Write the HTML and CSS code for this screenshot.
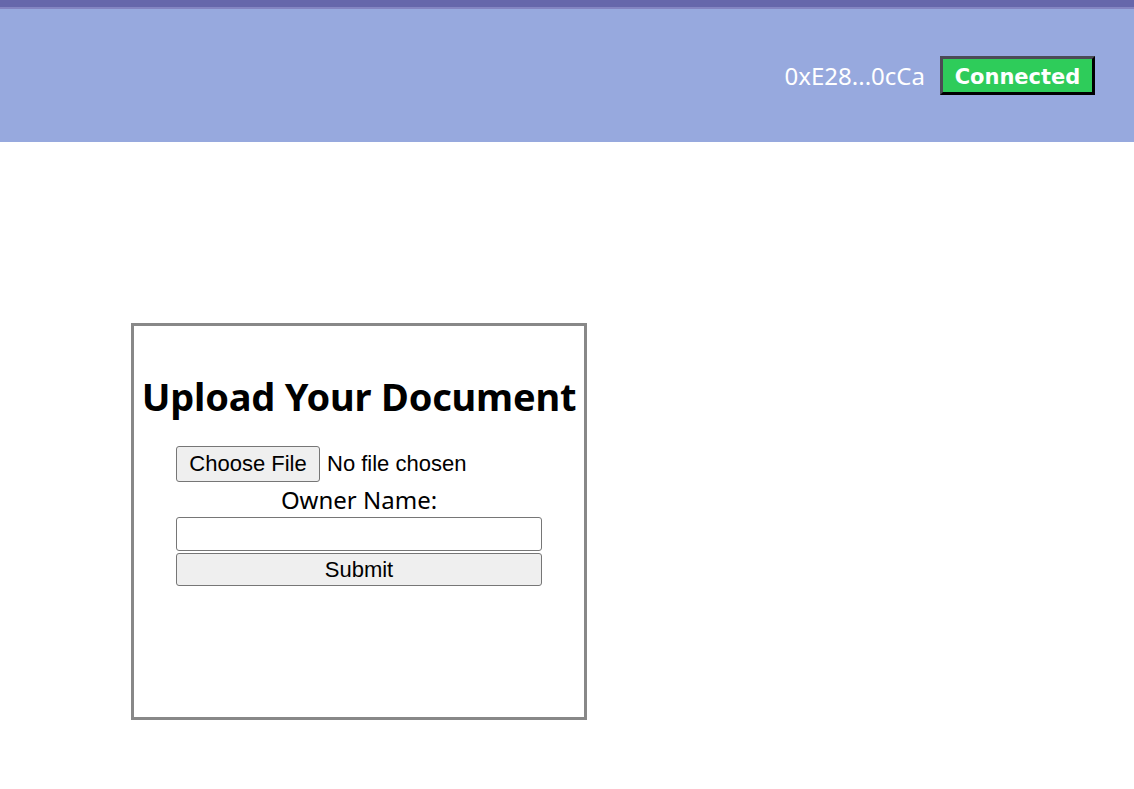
FILE: index.html
```html
<!DOCTYPE html>
<html>
<head>
<meta charset="utf-8">
<title>Upload</title>
<link rel="stylesheet" href="styles.css">
</head>
<body>
<header class="topbar">
  <div class="topbar-inner">
    <span class="address">0xE28...0cCa</span>
    <button class="connected">Connected</button>
  </div>
</header>
<main class="main">
  <section class="card">
    <h1 class="title">Upload Your Document</h1>
    <form class="form">
      <div class="file-row">
        <button type="button" class="file-btn">Choose File</button>
        <span class="file-text">No file chosen</span>
      </div>
      <label class="label" for="owner">Owner Name:</label>
      <input class="text-input" id="owner" type="text">
      <button type="button" class="submit">Submit</button>
    </form>
  </section>
</main>
</body>
</html>
```
FILE: styles.css
```css
html, body {
  margin: 0;
  padding: 0;
  background: #ffffff;
}
body {
  font-family: "Open Sans", "Noto Sans", sans-serif;
}
.topbar {
  background: #97a9de;
  border-top: 7px solid #6667ab;
  height: 142px;
  box-sizing: border-box;
}
.topbar-inner {
  border-top: 2px solid #8485c2;
  height: 135px;
  box-sizing: border-box;
  display: flex;
  align-items: center;
  justify-content: flex-end;
  padding-right: 39px;
  gap: 15px;
}
.address {
  color: #ffffff;
  font-size: 24px;
  font-family: "Noto Sans", sans-serif;
  letter-spacing: 0;
}
.connected {
  height: 39px;
  width: 155px;
  box-sizing: border-box;
  background: #2ecc5a;
  color: #ffffff;
  font-family: "DejaVu Sans", sans-serif;
  font-weight: 700;
  font-size: 21px;
  letter-spacing: 0;
  border-style: solid;
  border-width: 3px;
  border-color: #4b4b55 #000000 #000000 #4b4b55;
  padding: 2px 0 0 0;
}
.main {
  padding: 181px 0 0 131px;
}
.card {
  width: 456px;
  height: 397px;
  box-sizing: border-box;
  border: 3px solid #888888;
  padding-top: 42px;
  display: flex;
  flex-direction: column;
  align-items: center;
}
.title {
  margin: 0 0 22px 0;
  font-family: "Noto Sans", sans-serif;
  font-weight: 700;
  font-size: 38px;
  letter-spacing: -0.2px;
  line-height: 56px;
  color: #000000;
  white-space: nowrap;
}
.form {
  width: 366px;
  display: flex;
  flex-direction: column;
}
.file-row {
  display: flex;
  align-items: center;
  height: 36px;
  gap: 7px;
}
.file-btn {
  width: 144px;
  height: 36px;
  box-sizing: border-box;
  background: #efefef;
  border: 1px solid #767676;
  border-radius: 3px;
  font-family: "Liberation Sans", Arial, sans-serif;
  font-size: 22px;
  color: #000;
  padding: 0;
}
.file-text {
  font-family: "Liberation Sans", Arial, sans-serif;
  font-size: 22px;
  color: #000;
}
.label {
  display: block;
  text-align: center;
  font-family: "Noto Sans", sans-serif;
  font-size: 24px;
  line-height: 35px;
  height: 35px;
  color: #000;
}
.text-input {
  width: 366px;
  height: 34px;
  box-sizing: border-box;
  border: 1px solid #767676;
  border-radius: 3px;
  margin: 0;
  padding: 0 4px;
  font-size: 20px;
}
.submit {
  margin-top: 2px;
  width: 366px;
  height: 33px;
  box-sizing: border-box;
  background: #efefef;
  border: 1px solid #767676;
  border-radius: 3px;
  font-family: "Liberation Sans", Arial, sans-serif;
  font-size: 22px;
  color: #000;
  padding: 0;
}
```
